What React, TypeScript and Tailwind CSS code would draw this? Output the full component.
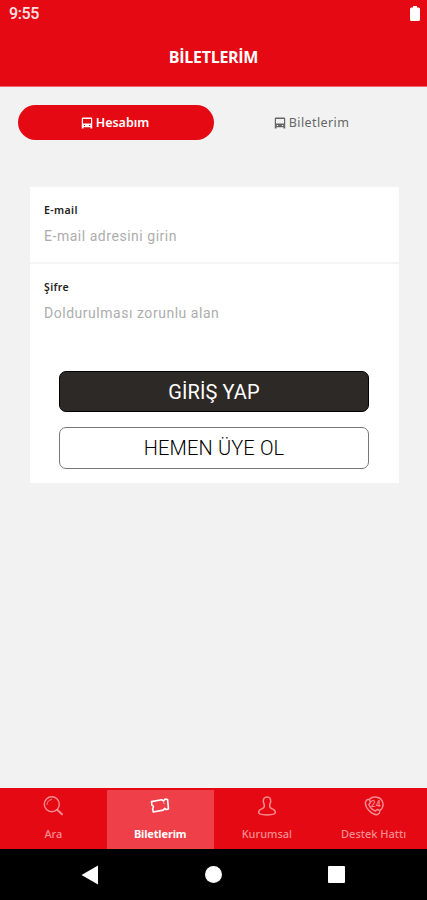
import type { ReactNode } from 'react';
import clsx from 'clsx';

function BusIcon({ className }: { className?: string }) {
  return (
    <svg viewBox="0 0 12 12" className={clsx('h-3 w-3', className)} fill="currentColor">
      <path
        fillRule="evenodd"
        d="M2 .5h8c.7 0 1.200.5 1.200 1.200V11.500H9.500V10.200H2.500v1.300H.8V1.700C.8 1 1.300.5 2 .5zM2 2v4.500h8V2zM2.800 8v1h1.200v-1zM8 8v1h1.200v-1z"
      />
    </svg>
  );
}

function SearchIcon() {
  return (
    <svg viewBox="0 0 20 20" className="h-5 w-5" fill="none" stroke="currentColor" strokeWidth="1.400" strokeLinecap="round">
      <circle cx="8.800" cy="8.300" r="7.500" />
      <path d="M4 8.300a4.800 4.800 0 0 1 4.600-4.800" strokeWidth="1" />
      <path d="M14.200 13.800l4.800 4.400" strokeWidth="2" />
    </svg>
  );
}

function TicketIcon() {
  return (
    <svg viewBox="0 0 20 20" className="h-5 w-5" fill="none" stroke="currentColor" strokeWidth="1.600" strokeLinejoin="round">
      <path d="M1.500 5.600L11.700 3.700L13.500 5L15.200 3L17.600 3.600L18.500 13L16.300 13.600L14.800 12.400L13.200 14.100L3.300 16L2.600 12.300C4 11.200 3.600 9.600 1.900 9.200Z" />
      <path d="M13.800 6.500l.3 1.200" strokeWidth="1" />
    </svg>
  );
}

function PersonIcon() {
  return (
    <svg viewBox="0 0 20 20" className="h-5 w-5" fill="none" stroke="currentColor" strokeWidth="1.500" strokeLinejoin="round">
      <path d="M10 .9C7.300.9 6.200 2.700 6.300 5.400C6.400 7 7.400 8.300 7.400 9.800C7.400 11.500 6.500 12.300 4.700 12.900C2.400 13.600 1.600 14.600 1.600 16.600C1.600 18.400 4.500 18.900 10 18.900S18.400 18.400 18.400 16.600C18.400 14.600 17.600 13.600 15.300 12.900C13.500 12.300 12.600 11.500 12.600 9.800C12.600 8.300 13.600 7 13.700 5.400C13.800 2.700 12.700.9 10 .9Z" />
    </svg>
  );
}

function SupportIcon() {
  return (
    <svg viewBox="0 0 20 20" className="h-5 w-5" fill="none" stroke="currentColor" strokeWidth="1.400" strokeLinejoin="round">
      <path d="M5.300 3.200C9.500-.5 16.500.8 18.400 5.500C19.700 9 18.500 12.500 16 14.400L15.400 17.200L12.900 18.800C7.500 18.300 1.500 12.500 1.300 6.400L3 3.700L5.400 3.200L6.400 6.800L4.800 8.500C6 11.500 8.500 13.900 11.400 15L13.200 13.500L16 14.400" />
      <text x="6.800" y="10.900" fontSize="8.500" fontWeight="500" fontFamily="Roboto, sans-serif" fill="currentColor" stroke="none">
        24
      </text>
    </svg>
  );
}

type NavItem = {
  label: string;
  icon: ReactNode;
};

const navItems: NavItem[] = [
  { label: 'Ara', icon: <SearchIcon /> },
  { label: 'Biletlerim', icon: <TicketIcon /> },
  { label: 'Kurumsal', icon: <PersonIcon /> },
  { label: 'Destek Hattı', icon: <SupportIcon /> },
];

function Field({ label, placeholder }: { label: string; placeholder: string }) {
  return (
    <label className="block px-[14px] pt-4">
      <span className="block text-[10.500px] leading-[15px] font-semibold tracking-[0.400px] text-[#222]">{label}</span>
      <input
        placeholder={placeholder}
        className="mt-[7px] block h-[22px] w-full bg-transparent font-[Roboto,sans-serif] text-[14px] tracking-[0.530px] outline-none placeholder:text-[#adadad]"
      />
    </label>
  );
}

export default function App() {
  const active = 'Biletlerim';

  return (
    <div className="flex h-[900px] w-[427px] flex-col overflow-hidden bg-[#f2f2f2] font-['Noto_Sans',sans-serif]">
      <header className="h-[87px] border-b border-[#ef6b70] bg-[#e50914] text-white">
        <div className="flex h-7 items-center justify-between pr-[7px] pl-[9px]">
          <span className="font-[Roboto,sans-serif] text-[16px] leading-7 font-medium tracking-[-0.400px] text-[#ffe1e2]">9:55</span>
          <svg viewBox="0 0 10 16" className="h-4 w-[10px]" fill="currentColor">
            <path d="M3 0h4v1.500h1.500Q10 1.500 10 3v10.500Q10 15 8.500 15h-7Q0 15 0 13.500V3Q0 1.500 1.500 1.500H3z" />
          </svg>
        </div>
        <h1 className="text-center font-['Open_Sans',sans-serif] text-[16px] leading-[58px] font-bold tracking-[-0.300px]">BİLETLERİM</h1>
      </header>

      <div className="mt-[18px] flex h-[35px] px-[18px] text-[12.500px]">
        <button className="flex w-[196px] items-center justify-center gap-[3px] rounded-full bg-[#e50914] pt-px pr-[2px] font-semibold text-white">
          <BusIcon />
          <span>Hesabım</span>
        </button>
        <button className="flex w-[195px] items-center justify-center gap-[3px] pt-px tracking-[0.400px] text-[#666]">
          <BusIcon />
          <span>Biletlerim</span>
        </button>
      </div>

      <main className="mt-[47px] ml-[30px] h-[296px] w-[369px] bg-white">
        <div className="h-[77px] border-b-2 border-[#f4f4f4]">
          <Field label="E-mail" placeholder="E-mail adresini girin" />
        </div>
        <div className="h-[107px]">
          <Field label="Şifre" placeholder="Doldurulması zorunlu alan" />
        </div>
        <div className="flex flex-col gap-[15px] pr-[30px] pl-[29px] font-[Roboto,sans-serif] text-[20px]">
          <button className="h-[41px] rounded-[7px] border border-black bg-[#2d2926] tracking-[0.100px] text-white">GİRİŞ YAP</button>
          <button className="h-[42px] rounded-[7px] border border-[#777] font-light tracking-[0.150px] text-black">HEMEN ÜYE OL</button>
        </div>
      </main>

      <nav className="mt-auto grid h-[61px] grid-cols-4 border-t-2 border-[#e50914] bg-[#e50914]">
        {navItems.map(({ label, icon }) => (
          <button
            key={label}
            className={clsx(
              'flex flex-col items-center pt-[6px] text-[11px] leading-[15px]',
              label === active ? 'bg-[#ef3f49] font-bold tracking-[-0.150px] text-white' : 'font-medium text-[#f68d91]'
            )}
          >
            {icon}
            <span className="mt-[10px] whitespace-nowrap">{label}</span>
          </button>
        ))}
      </nav>

      {/* Android system navigation */}
      <div className="flex h-[51px] items-center justify-between bg-black pr-[82px] pl-[81px] text-white">
        <svg viewBox="0 0 17 20" className="h-5 w-[17px]" fill="currentColor">
          <path d="M17 .500v19L.500 10z" />
        </svg>
        <div className="h-[17px] w-[17px] rounded-full bg-white" />
        <div className="h-[17px] w-[17px] rounded-[1px] bg-white" />
      </div>
    </div>
  );
}
